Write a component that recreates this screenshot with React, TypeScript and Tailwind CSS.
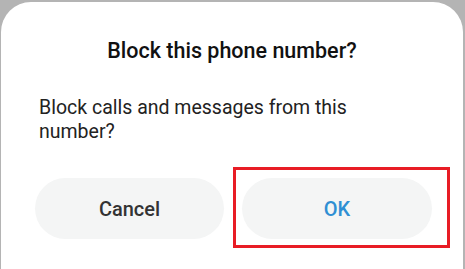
export default function App() {
  return (
    <div className="w-[465px] h-[269px] bg-[#b4b4b4] pt-[2px] pl-[1px] pr-[2px] overflow-hidden" style={{ fontFamily: "Roboto, 'Noto Sans', sans-serif" }}>
      <div className="relative h-full bg-white rounded-t-[30px]">
        <div className="pt-[37px] text-center text-[21.5px] font-medium leading-[24px] text-[#111]">
          Block this phone number?
        </div>
        <p className="mt-[33px] pl-[38px] w-[420px] text-[19.5px] leading-[24px] text-[#222]">
          Block calls and messages from this number?
        </p>
        <div className="mt-[34px] flex gap-[18px] pl-[34px]">
          <button className="w-[189px] h-[61px] rounded-full bg-[#f4f5f5] text-[20px] font-medium text-[#333]">
            Cancel
          </button>
          <button className="w-[190px] h-[61px] rounded-full bg-[#f4f5f5] text-[20px] font-medium text-[#2f8fd3]">
            OK
          </button>
        </div>
        <div className="absolute left-[232px] top-[165px] w-[217px] h-[81px] border-[3px] border-[#e81c25]" />
      </div>
    </div>
  );
}
